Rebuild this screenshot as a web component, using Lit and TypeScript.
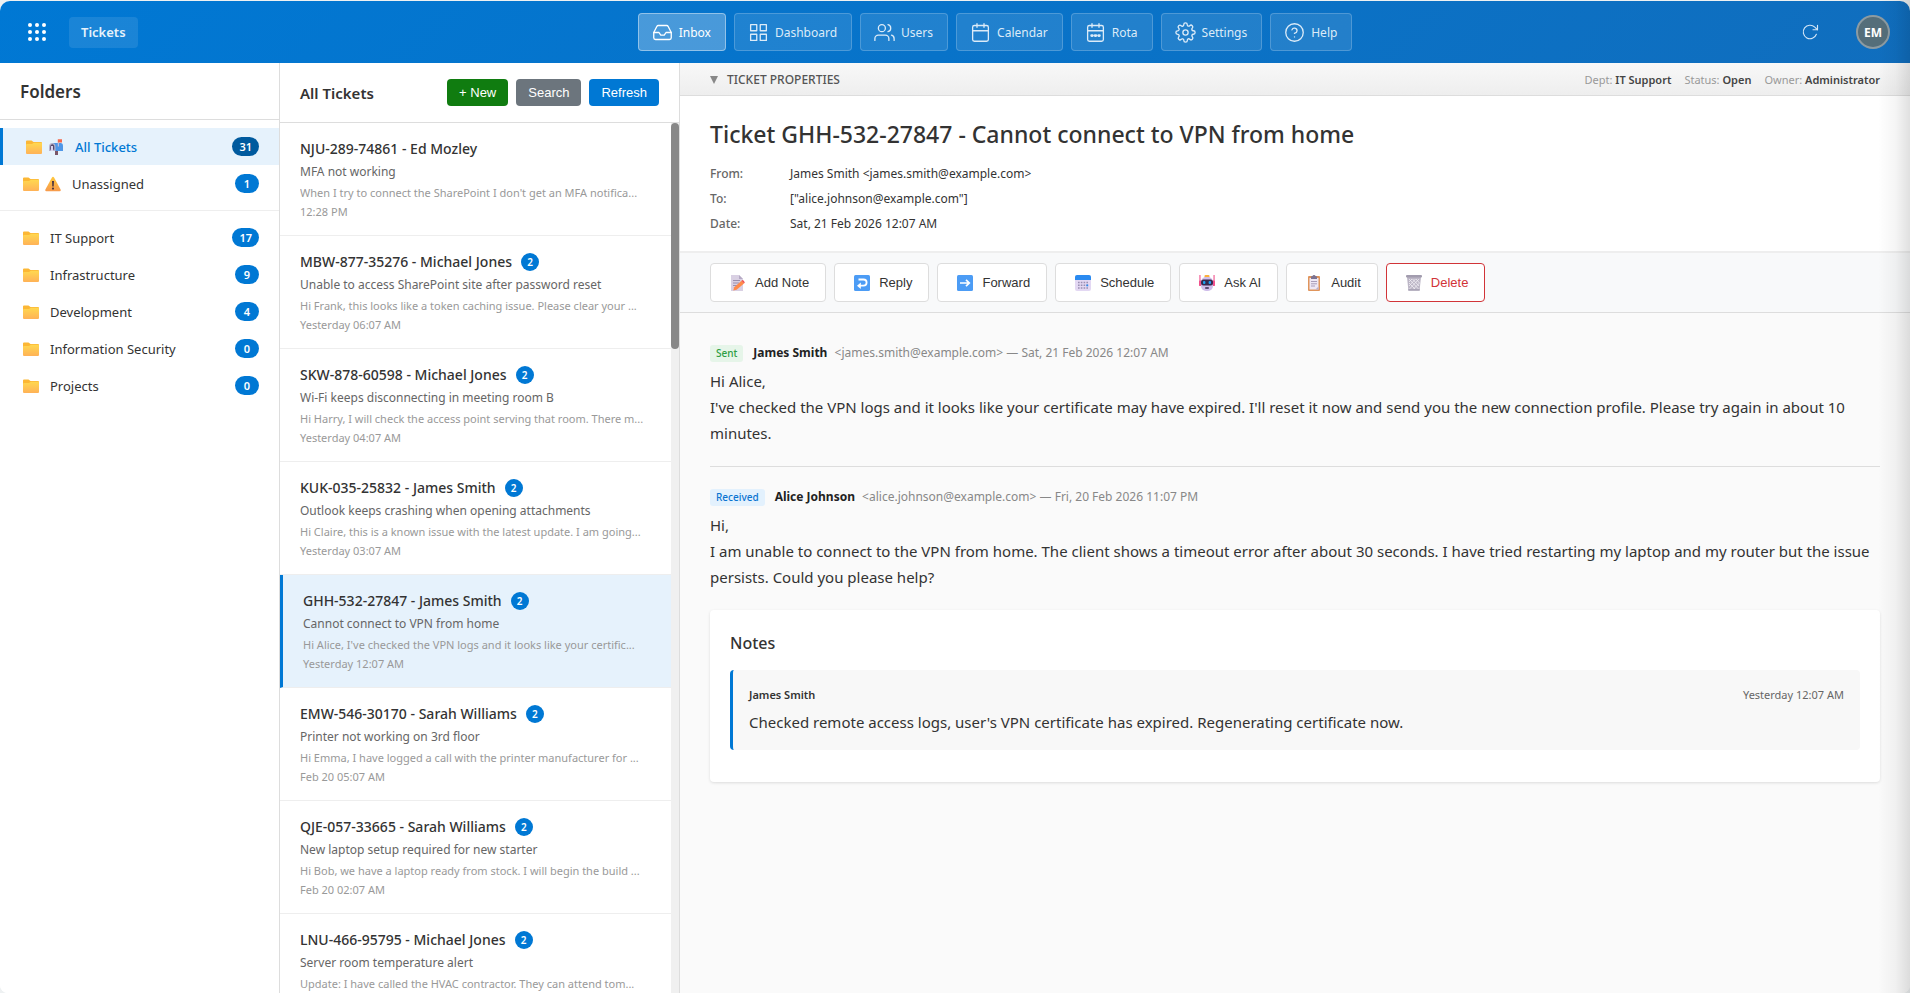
import { LitElement, html, css, svg, nothing } from "lit";
import { customElement } from "lit/decorators.js";
import { classMap } from "lit/directives/class-map.js";

const stroke = (body: unknown, size = 21) => html`<svg class="line-icon" width=${size} height=${size} viewBox="0 0 24 24" aria-hidden="true">${body}</svg>`;

const navItems = [
  { label: "Inbox", active: true, icon: svg`<path d="M22 12h-6l-2 3h-4l-2-3H2"/><path d="M5.5 5.1L2 12v6a2 2 0 0 0 2 2h16a2 2 0 0 0 2-2v-6l-3.500-6.900A2 2 0 0 0 16.800 4H7.200a2 2 0 0 0-1.700 1.100z"/>` },
  { label: "Dashboard", icon: svg`<rect x="3" y="3" width="7" height="7"/><rect x="14" y="3" width="7" height="7"/><rect x="14" y="14" width="7" height="7"/><rect x="3" y="14" width="7" height="7"/>` },
  { label: "Users", icon: svg`<path d="M17 21v-2a4 4 0 0 0-4-4H5a4 4 0 0 0-4 4v2"/><circle cx="9" cy="7" r="4"/><path d="M23 21v-2a4 4 0 0 0-3-3.900"/><path d="M16 3.100a4 4 0 0 1 0 7.800"/>` },
  { label: "Calendar", icon: svg`<rect x="3" y="4" width="18" height="18" rx="2"/><path d="M16 2v4M8 2v4M3 10h18"/>` },
  { label: "Rota", icon: svg`<rect x="3" y="4" width="18" height="18" rx="2"/><path d="M16 2v4M8 2v4M3 10h18"/><path d="M7.500 15.500h1M11.500 15.500h1M15.500 15.500h1" stroke-width="3"/>` },
  { label: "Settings", icon: svg`<circle cx="12" cy="12" r="3"/><path d="M19.400 15a1.650 1.650 0 0 0 .33 1.820l.06.06a2 2 0 0 1-2.830 2.830l-.06-.06a1.650 1.650 0 0 0-1.820-.33 1.650 1.650 0 0 0-1 1.510V21a2 2 0 0 1-4 0v-.09A1.650 1.650 0 0 0 9 19.400a1.650 1.650 0 0 0-1.820.33l-.06.06a2 2 0 0 1-2.830-2.830l.06-.06a1.650 1.650 0 0 0 .33-1.820 1.650 1.650 0 0 0-1.510-1H3a2 2 0 0 1 0-4h.09A1.650 1.650 0 0 0 4.600 9a1.650 1.650 0 0 0-.33-1.820l-.06-.06a2 2 0 0 1 2.830-2.830l.06.06a1.650 1.650 0 0 0 1.820.33H9a1.650 1.650 0 0 0 1-1.510V3a2 2 0 0 1 4 0v.09a1.650 1.650 0 0 0 1 1.510 1.650 1.650 0 0 0 1.820-.33l.06-.06a2 2 0 0 1 2.830 2.830l-.06.06a1.650 1.650 0 0 0-.33 1.820V9a1.650 1.650 0 0 0 1.510 1H21a2 2 0 0 1 0 4h-.09a1.650 1.650 0 0 0-1.510 1z"/>` },
  { label: "Help", icon: svg`<circle cx="12" cy="12" r="10"/><path d="M9.090 9a3 3 0 0 1 5.830 1c0 2-3 3-3 3"/><path d="M12 17h.01"/>` },
];

const pic = (body: unknown) => html`<svg class="pic" width="16" height="16" viewBox="0 0 16 16" aria-hidden="true">${body}</svg>`;

const folderPic = html`<svg class="pic" width="16" height="16" viewBox="0 0 16 16" aria-hidden="true">
  <defs><linearGradient id="fold" x1="0" y1="0" x2="0" y2="1"><stop offset="0" stop-color="#ffd84f"/><stop offset="1" stop-color="#ffb257"/></linearGradient></defs>
  <path d="M0 2.500Q0 1.500 1 1.500H5.500L7.500 3H15Q16 3 16 4V8H0Z" fill="#fcb735"/>
  <path d="M0 6Q0 5 1 5H6L8 3.800H15Q16 3.800 16 4.800V14Q16 15 15 15H1Q0 15 0 14Z" fill="url(#fold)"/></svg>`;

const mailboxPic = pic(svg`
  <path d="M7 11H10V16H7Z" fill="#7b5668"/>
  <path d="M4 4H12.500Q15 4 15 7V12H4Z" fill="#4f97e8"/>
  <path d="M1 8Q1 4 4.200 4Q7.500 4 7.500 8V12H1Z" fill="#b9b5cc"/>
  <path d="M2.200 8Q2.200 5.300 4.200 5.300Q6.300 5.300 6.300 8V10.800H2.200Z" fill="#55496d"/>
  <path d="M3 7H5V12H3Z" fill="#dcd5ee"/>
  <path d="M9.800 7.500V3H10.900V7.500Z" fill="#c9c4dc"/>
  <path d="M9.800.3H14V3.400H9.800Z" fill="#f5694c"/>`);

const warningPic = pic(svg`
  <defs><linearGradient id="warn" x1="0" y1="0" x2="0" y2="1"><stop offset="0" stop-color="#ffc83d"/><stop offset="1" stop-color="#f79a4c"/></linearGradient></defs>
  <path d="M8 .8Q8.700.8 9.200 1.700L15.600 13.500Q16.200 15.200 14.600 15.200H1.400Q-.2 15.200.4 13.500L6.800 1.700Q7.300.8 8 .8Z" fill="url(#warn)"/>
  <path d="M7 5H9L8.700 10.600H7.300Z" fill="#4a3540"/><circle cx="8" cy="12.600" r="1.100" fill="#4a3540"/>`);

interface Folder { name: string; count: number; mark?: unknown; active?: boolean }
const systemFolders: Folder[] = [
  { name: "All Tickets", count: 31, mark: mailboxPic, active: true },
  { name: "Unassigned", count: 1, mark: warningPic },
];
const deptFolders: Folder[] = [
  { name: "IT Support", count: 17 },
  { name: "Infrastructure", count: 9 },
  { name: "Development", count: 4 },
  { name: "Information Security", count: 0 },
  { name: "Projects", count: 0 },
];

const tickets = [
  { id: "NJU-289-74861", who: "Ed Mozley", n: 0, subject: "MFA not working", preview: "When I try to connect the SharePoint I don't get an MFA notifica...", time: "12:28 PM" },
  { id: "MBW-877-35276", who: "Michael Jones", n: 2, subject: "Unable to access SharePoint site after password reset", preview: "Hi Frank, this looks like a token caching issue. Please clear your ...", time: "Yesterday 06:07 AM" },
  { id: "SKW-878-60598", who: "Michael Jones", n: 2, subject: "Wi-Fi keeps disconnecting in meeting room B", preview: "Hi Harry, I will check the access point serving that room. There m...", time: "Yesterday 04:07 AM" },
  { id: "KUK-035-25832", who: "James Smith", n: 2, subject: "Outlook keeps crashing when opening attachments", preview: "Hi Claire, this is a known issue with the latest update. I am going...", time: "Yesterday 03:07 AM" },
  { id: "GHH-532-27847", who: "James Smith", n: 2, subject: "Cannot connect to VPN from home", preview: "Hi Alice, I've checked the VPN logs and it looks like your certific...", time: "Yesterday 12:07 AM", active: true },
  { id: "EMW-546-30170", who: "Sarah Williams", n: 2, subject: "Printer not working on 3rd floor", preview: "Hi Emma, I have logged a call with the printer manufacturer for ...", time: "Feb 20 05:07 AM" },
  { id: "QJE-057-33665", who: "Sarah Williams", n: 2, subject: "New laptop setup required for new starter", preview: "Hi Bob, we have a laptop ready from stock. I will begin the build ...", time: "Feb 20 02:07 AM" },
  { id: "LNU-466-95795", who: "Michael Jones", n: 2, subject: "Server room temperature alert", preview: "Update: I have called the HVAC contractor. They can attend tom...", time: "" },
];

const actions = [
  { label: "Add Note", icon: pic(svg`<path d="M1 0H9L13 4V16H1Z" fill="#d9d0e3"/><path d="M9 0L13 4H9Z" fill="#b5a9c4"/><path d="M3 5.500H10M3 8H9M3 10.500H7" stroke="#9a8fae" stroke-width="1"/><path d="M3.200 15.500L4.200 12.200L11.500 5.800L14 8.400L6.600 14.800Z" fill="#ff8a4a"/><path d="M11.500 5.800L12.500 5Q14 5.200 14.800 7.400L14 8.400Z" fill="#f0504a"/>`) },
  { label: "Reply", icon: pic(svg`<rect width="16" height="16" rx="1.500" fill="#4c9cf5"/><path d="M4.500 4.500H9.500A3.100 3.100 0 0 1 9.500 10.700H5.500" fill="none" stroke="#fff" stroke-width="1.800"/><path d="M6.800 7.500L3 10.700L6.800 14Z" fill="#fff"/>`) },
  { label: "Forward", icon: pic(svg`<rect width="16" height="16" rx="1.500" fill="#4c9cf5"/><path d="M3 8H12M9 4.800L12.300 8L9 11.200" fill="none" stroke="#fff" stroke-width="1.700"/>`) },
  { label: "Schedule", icon: pic(svg`<rect y="1" width="16" height="15" rx="2" fill="#e3d8f3"/><path d="M0 5V2Q0 0 2 0H14Q16 0 16 2V5Z" fill="#2a8af0"/><path d="M3 7.500H13M3 10.300H13M3 13.100H13" stroke="#9a8fb2" stroke-width="1.500" stroke-dasharray="1.600 1.200"/><rect x="11.400" y="9.500" width="1.800" height="1.800" fill="#2a8af0"/>`) },
  { label: "Ask AI", icon: pic(svg`<path d="M.4 0H1.500V11H.4ZM14.500 0H15.600V11H14.500Z" fill="#f0508c"/><rect x="5.500" y="0" width="5" height="3" rx="1" fill="#fbb03b"/><rect x="2" y="2" width="12" height="14" rx="5" fill="#cfbdea"/><path d="M0 6.500Q0 5.500 1 5.500H2V11H1Q0 11 0 10ZM16 6.500Q16 5.500 15 5.500H14V11H15Q16 11 16 10Z" fill="#f0508c"/><rect x="2" y="4.500" width="12" height="6" rx="2.500" fill="#37294f"/><rect x="4" y="6" width="2.400" height="3" rx="1" fill="#1fa2f2"/><rect x="9.600" y="6" width="2.400" height="3" rx="1" fill="#1fa2f2"/><rect x="6" y="12.200" width="4" height="1.600" rx=".8" fill="#37294f"/>`) },
  { label: "Audit", icon: pic(svg`<rect x="2" y="1" width="12" height="15" rx="1" fill="#e0955c"/><path d="M3.500 3H12.500V14.500H3.500Z" fill="#eee7f6"/><path d="M9.500 14.500L12.500 11.500V14.500Z" fill="#b9abcb"/><path d="M5 2Q5 1 6.500 1Q6.800 0 8 0Q9.200 0 9.500 1Q11 1 11 2V4H5Z" fill="#7c7390"/><path d="M5 6.500H11M5 8.800H11M5 11H9" stroke="#a89cba" stroke-width="1"/>`) },
  { label: "Delete", danger: true, icon: pic(svg`<path d="M1 2H15L13.600 15.200H2.400Z" fill="#bcb6c6"/><path d="M3 4L12.500 14M6.500 4L13 11M10 4L13.500 8M3 8L9 14M13 4L3.500 14M9.500 4L3 11M6 4L3 7M13.500 8L7.500 14" stroke="#f1eff5" stroke-width=".8"/><rect x="0" y="0" width="16" height="2.600" rx="1" fill="#a29cae"/><path d="M2.300 14H13.700V15.800H2.300Z" fill="#aaa4b6"/>`) },
];

const messages = [
  { kind: "Sent", cls: "sent", name: "James Smith", meta: "<james.smith@example.com> — Sat, 21 Feb 2026 12:07 AM", lines: ["Hi Alice,", "I've checked the VPN logs and it looks like your certificate may have expired. I'll reset it now and send you the new connection profile. Please try again in about 10 minutes."] },
  { kind: "Received", cls: "received", name: "Alice Johnson", meta: "<alice.johnson@example.com> — Fri, 20 Feb 2026 11:07 PM", lines: ["Hi,", "I am unable to connect to the VPN from home. The client shows a timeout error after about 30 seconds. I have tried restarting my laptop and my router but the issue persists. Could you please help?"] },
];

@customElement("app-root")
export class AppRoot extends LitElement {
  static styles = css`
    :host { display: block; font-family: "Noto Sans", "Open Sans", sans-serif; font-size: 13px; color: #333; }
    * { box-sizing: border-box; }
    h1, h2, h3, p, dl, dd, ul { margin: 0; padding: 0; }
    ul { list-style: none; }
    a { color: inherit; text-decoration: none; }
    button { font-family: "Liberation Sans", Arial, sans-serif; font-size: 13px; margin: 0; cursor: pointer; }
    svg { display: block; flex: none; }
    .line-icon { fill: none; stroke: currentColor; stroke-width: 1.5; stroke-linecap: round; stroke-linejoin: round; }

    .shell { height: 100vh; display: flex; flex-direction: column; background: #eef1f2; padding-top: 1px; overflow: hidden; position: relative; }
    .edge { position: absolute; inset: 0 0 0 auto; width: 32px; background: linear-gradient(to left, rgba(0,0,0,.12), rgba(0,0,0,.04) 45%, transparent); pointer-events: none; }

    .top { height: 62px; flex: none; display: grid; grid-template-columns: 617fr auto 537fr; align-items: center; padding: 0 20px; background: linear-gradient(135deg, #0078d4, #106ebe); color: #fff; border-radius: 10px 10px 0 0; }
    .brand { display: flex; align-items: center; gap: 15px; }
    .waffle { width: 34px; height: 34px; border: 0; background: none; color: #fff; display: grid; place-items: center; padding: 0; }
    .product { font-size: 13px; font-weight: 600; line-height: 31px; padding: 0 12px; background: rgba(255,255,255,.1); border-radius: 4px; color: #e6f2fb; }
    .nav { display: flex; gap: 8px; }
    .nav a { display: flex; align-items: center; gap: 6px; height: 38px; padding: 0 14px 0 13px; border: 1px solid rgba(255,255,255,.2); border-radius: 4px; background: rgba(255,255,255,.1); color: #dcebf8; font-size: 12px; }
    .nav a.active { background: rgba(255,255,255,.27); border-color: rgba(255,255,255,.4); color: #fff; }
    .account { display: flex; justify-content: flex-end; align-items: center; gap: 28px; }
    .reload { width: 36px; height: 36px; padding: 0; border: 0; background: none; color: #d3e6f7; display: grid; place-items: center; }
    .avatar { width: 34px; height: 34px; padding: 0; border-radius: 50%; border: 2px solid #8c9ba2; background: #546e7a; color: #fff; font: 700 12px "Noto Sans", sans-serif; }

    .body { flex: 1; min-height: 0; display: grid; grid-template-columns: 280px 400px minmax(0, 1fr); background: #fff; border-radius: 0 0 8px 8px; overflow: hidden; }

    .folders { border-right: 1px solid #ddd; background: #fff; }
    .folders h2 { font-size: 17px; font-weight: 600; line-height: 24px; padding: 17px 20px 15px; border-bottom: 1px solid #ddd; }
    .folders ul { padding: 8px 0; }
    .folders ul + ul { border-top: 1px solid #eee; }
    .folder { display: flex; align-items: center; height: 37px; padding: 0 20px 0 23px; font-size: 13px; }
    .folder .pic + .pic { margin-left: 6px; }
    .folder .name { flex: 1; margin-left: 11px; }
    .folder .count { font: 600 11px/19px "Noto Sans", sans-serif; min-width: 24px; padding: 0 7px; text-align: center; border-radius: 10px; background: #0078d4; color: #fff; }
    .folder.active { background: #e6f2fc; border-left: 3px solid #0078d4; color: #0078d4; }
    .folder.active .name { font-weight: 500; }
    .folder.active .count { background: #005a9e; }

    .list { display: flex; flex-direction: column; min-height: 0; border-right: 1px solid #ddd; }
    .list-head { height: 60px; flex: none; display: flex; align-items: center; gap: 8px; padding: 0 20px; border-bottom: 1px solid #ddd; }
    .list-head h2 { flex: 1; font-size: 15px; font-weight: 600; line-height: 24px; }
    .list-head button { height: 27px; padding: 0 12px; border: 0; border-radius: 4px; color: #fff; font-weight: 500; }
    .new { background: #107c10; }
    .search { background: #6c757d; }
    .refresh { background: #0078d4; }
    .scroller { flex: 1; min-height: 0; display: flex; }
    .items { flex: 1; min-width: 0; overflow: hidden; }
    .rail { width: 8px; background: #f0f0f0; }
    .thumb { width: 8px; border-radius: 4px; background: #888; }
    .item { display: flex; flex-direction: column; gap: 3px; padding: 16px 20px 15px; border-bottom: 1px solid #eee; }
    .item.active { background: #e6f2fc; border-left: 3px solid #0078d4; }
    .item-head { display: flex; align-items: center; gap: 9px; font-size: 14px; font-weight: 500; line-height: 20px; }
    .bubble { width: 18px; height: 18px; border-radius: 50%; background: #0078d4; color: #fff; font-size: 10px; font-weight: 600; line-height: 18px; text-align: center; }
    .subject { font-size: 12px; line-height: 20px; color: #666; }
    .preview { font-size: 11px; line-height: 16px; color: #999; white-space: nowrap; overflow: hidden; text-overflow: ellipsis; }
    .time { font-size: 11px; line-height: 16px; color: #999; }

    .detail { background: #fafafa; min-width: 0; overflow: hidden; }
    .props { height: 33px; display: flex; align-items: center; gap: 8px; padding: 1px 30px 0; border-bottom: 1px solid #ddd; background: linear-gradient(#f8f8f8, #eee); font-size: 11px; }
    .props-toggle { flex: 1; display: flex; align-items: center; gap: 9px; padding: 0; border: 0; background: none; font: 500 12px/16px "Noto Sans", sans-serif; color: #555; text-transform: uppercase; }
    .props-list { display: flex; gap: 13px; color: #999; line-height: 16px; }
    .props-list b { font-weight: 600; color: #444; }
    .summary { background: #fff; padding: 20px 30px 15px; border-bottom: 2px solid #eee; }
    .summary h1 { font-size: 23px; font-weight: 500; line-height: 36px; margin-bottom: 9px; }
    .summary dl { display: grid; grid-template-columns: 80px 1fr; font-size: 12px; line-height: 25px; }
    .summary dt { color: #666; font-weight: 500; }
    .tools { display: flex; gap: 8px; padding: 10px 30px; background: #f8f9fa; border-bottom: 1px solid #ddd; }
    .tools button { display: flex; align-items: center; gap: 6px; height: 39px; padding: 0 16px; background: #fff; border: 1px solid #ddd; border-radius: 4px; color: #333; }
    .tools .slot { width: 22px; display: grid; place-items: center; }
    .tools .danger { color: #d13438; border-color: #d13438; }

    .thread { padding: 30px; }
    .message { padding-bottom: 20px; }
    .message + .message { padding-top: 20px; border-top: 1px solid #ddd; }
    .msg-head { display: flex; align-items: center; gap: 10px; line-height: 20px; font-size: 12px; color: #888; margin-bottom: 5px; }
    .msg-head b { color: #222; font-weight: 700; margin-right: 4px; }
    .tag { font-size: 10px; line-height: 17px; padding: 0 6px; border-radius: 3px; font-weight: 500; }
    .sent { background: #e6f5e9; color: #2e9e44; }
    .received { background: #e3f1fd; color: #0b74d1; }
    .message p { font-size: 15px; line-height: 26px; }
    .notes { background: #fff; border-radius: 4px; padding: 20px 20px 32px; box-shadow: 0 1px 3px rgba(0,0,0,.12); }
    .notes h3 { font-size: 16px; font-weight: 500; line-height: 26px; margin-bottom: 14px; }
    .note { border-left: 3px solid #0078d4; border-radius: 4px; background: #f8f8f8; padding: 16px 16px 15px; }
    .note-head { display: flex; justify-content: space-between; font-size: 11px; line-height: 18px; margin-bottom: 5px; color: #666; }
    .note-head b { font-weight: 600; color: #333; }
    .note p { font-size: 15px; line-height: 26px; }
  `;

  private folder(f: Folder) {
    return html`<li><a href="#" class=${classMap({ folder: true, active: !!f.active })}>
      ${folderPic}${f.mark ?? nothing}<span class="name">${f.name}</span><span class="count">${f.count}</span></a></li>`;
  }

  render() {
    return html`<div class="shell">
      <header class="top">
        <div class="brand">
          <button class="waffle" aria-label="Apps"><svg width="18" height="18" viewBox="0 0 18 18" fill="currentColor">
            ${[2, 9, 16].map((y) => [2, 9, 16].map((x) => svg`<circle cx=${x} cy=${y} r="2"/>`))}</svg></button>
          <span class="product">Tickets</span>
        </div>
        <nav class="nav">${navItems.map((n) => html`<a href="#" class=${classMap({ active: !!n.active })}>${stroke(n.icon)}<span>${n.label}</span></a>`)}</nav>
        <div class="account">
          <button class="reload" aria-label="Reload">${stroke(svg`<path d="M22 3v6h-6"/><path d="M20.500 15a9 9 0 1 1-2.100-9.400L22 9"/>`, 18)}</button>
          <button class="avatar">EM</button>
        </div>
      </header>
      <div class="body">
        <aside class="folders">
          <h2>Folders</h2>
          <ul>${systemFolders.map((f) => this.folder(f))}</ul>
          <ul>${deptFolders.map((f) => this.folder(f))}</ul>
        </aside>
        <section class="list">
          <div class="list-head"><h2>All Tickets</h2>
            <button class="new">+ New</button><button class="search">Search</button><button class="refresh">Refresh</button></div>
          <div class="scroller">
            <div class="items">${tickets.map((t) => html`<a href="#" class=${classMap({ item: true, active: !!t.active })}>
              <div class="item-head"><span>${t.id} - ${t.who}</span>${t.n ? html`<span class="bubble">${t.n}</span>` : nothing}</div>
              <div class="subject">${t.subject}</div><div class="preview">${t.preview}</div><div class="time">${t.time}</div></a>`)}</div>
            <div class="rail"><div class="thumb" style="height:26%"></div></div>
          </div>
        </section>
        <main class="detail">
          <div class="props">
            <button class="props-toggle"><svg width="8" height="8" viewBox="0 0 8 8"><path d="M0 0H8L4 8Z" fill="#888"/></svg>Ticket Properties</button>
            <div class="props-list"><span>Dept: <b>IT Support</b></span><span>Status: <b>Open</b></span><span>Owner: <b>Administrator</b></span></div>
          </div>
          <div class="summary">
            <h1>Ticket GHH-532-27847 - Cannot connect to VPN from home</h1>
            <dl><dt>From:</dt><dd>James Smith &lt;james.smith@example.com&gt;</dd>
              <dt>To:</dt><dd>["alice.johnson@example.com"]</dd>
              <dt>Date:</dt><dd>Sat, 21 Feb 2026 12:07 AM</dd></dl>
          </div>
          <div class="tools">${actions.map((a) => html`<button class=${classMap({ danger: !!a.danger })}><span class="slot">${a.icon}</span>${a.label}</button>`)}</div>
          <div class="thread">
            ${messages.map((m) => html`<article class="message">
              <div class="msg-head"><span class="tag ${m.cls}">${m.kind}</span><span><b>${m.name}</b> ${m.meta}</span></div>
              ${m.lines.map((l) => html`<p>${l}</p>`)}</article>`)}
            <section class="notes"><h3>Notes</h3>
              <div class="note"><div class="note-head"><b>James Smith</b><span>Yesterday 12:07 AM</span></div>
                <p>Checked remote access logs, user's VPN certificate has expired. Regenerating certificate now.</p></div>
            </section>
          </div>
        </main>
      </div>
      <div class="edge"></div>
    </div>`;
  }
}
